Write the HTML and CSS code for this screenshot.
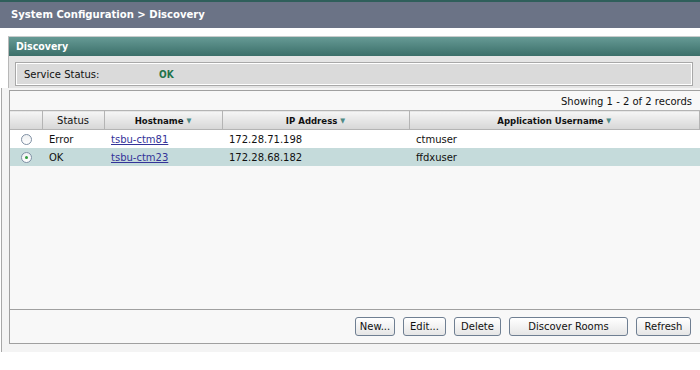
FILE: index.html
```html
<!DOCTYPE html>
<html lang="en">
<head>
    <meta charset="UTF-8">
    <title>System Configuration &gt; Discovery</title>
    <link rel="stylesheet" href="styles.css">
</head>
<body>
    <div class="topline"></div>
    <div class="titlebar">System Configuration &gt; Discovery</div>

    <div class="panel">
        <div class="panel-head">Discovery</div>
        <div class="status-box">
            <span class="status-label">Service Status:</span>
            <span class="status-value">OK</span>
        </div>
    </div>

    <div class="grid-area">
        <div class="grid">
            <div class="records">Showing 1 - 2 of 2 records</div>
            <table class="list">
                <colgroup>
                    <col class="c-sel">
                    <col class="c-status">
                    <col class="c-host">
                    <col class="c-ip">
                    <col>
                </colgroup>
                <thead>
                    <tr>
                        <th></th>
                        <th class="plain">Status</th>
                        <th>Hostname <span class="arrow">&#9660;</span></th>
                        <th>IP Address <span class="arrow">&#9660;</span></th>
                        <th>Application Username <span class="arrow">&#9660;</span></th>
                    </tr>
                </thead>
                <tbody>
                    <tr>
                        <td class="sel"><span class="radio"></span></td>
                        <td>Error</td>
                        <td><a href="#">tsbu-ctm81</a></td>
                        <td>172.28.71.198</td>
                        <td>ctmuser</td>
                    </tr>
                    <tr class="selected">
                        <td class="sel"><span class="radio checked"></span></td>
                        <td>OK</td>
                        <td><a href="#">tsbu-ctm23</a></td>
                        <td>172.28.68.182</td>
                        <td>ffdxuser</td>
                    </tr>
                </tbody>
            </table>
            <div class="filler"></div>
            <div class="actions">
                <button class="btn b-new">New...</button>
                <button class="btn b-edit">Edit...</button>
                <button class="btn b-delete">Delete</button>
                <button class="btn b-discover">Discover Rooms</button>
                <button class="btn b-refresh">Refresh</button>
            </div>
        </div>
    </div>
</body>
</html>
```

FILE: styles.css
```css
/* General */
body {
    margin: 0;
    background-color: #fff;
    font-family: 'DejaVu Sans', Verdana, sans-serif;
    font-size: 10px;
    color: #111;
}

.topline {
    height: 2px;
    background-color: #2f5f5b;
}

.titlebar {
    height: 26px;
    line-height: 26px;
    padding-left: 11px;
    background-color: #6b7386;
    color: #fff;
    font-family: 'DejaVu Sans Condensed', 'DejaVu Sans', sans-serif;
    font-weight: bold;
    font-size: 11.2px;
    margin-bottom: 8px;
}

/* Discovery panel */
.panel {
    margin-left: 8px;
    border-top: 1px solid #c8cccc;
    border-left: 1px solid #b8b8b8;
    background-color: #e4e4e4;
    height: 51px;
}

.panel-head {
    height: 19px;
    line-height: 19px;
    padding-left: 7px;
    background: linear-gradient(#669a95, #3b6f69);
    color: #fff;
    font-family: 'DejaVu Sans Condensed', 'DejaVu Sans', sans-serif;
    font-weight: bold;
    font-size: 10.5px;
}

.status-box {
    display: flex;
    align-items: center;
    margin: 6px 7px 0 6px;
    height: 22px;
    border: 1px solid #a8a8a8;
    box-shadow: inset 1px 1px 0 #fff, inset -1px -1px 0 #fff;
    background-color: #dadada;
}

.status-label {
    width: 135px;
    padding-left: 8px;
}

.status-value {
    color: #22734a;
    font-family: 'DejaVu Sans Condensed', 'DejaVu Sans', sans-serif;
    font-weight: bold;
}

/* Grid */
.grid-area {
    margin-left: 1px;
    border-left: 1px solid #a8a8a8;
    padding: 2px 0 8px 7px;
    background-color: #f4f4f4;
}

.grid {
    border: 1px solid #a0a0a0;
    border-right: none;
    background-color: #f8f8f8;
    height: 252px;
    display: flex;
    flex-direction: column;
}

.records {
    height: 19px;
    line-height: 22px;
    text-align: right;
    padding-right: 8px;
}

.list {
    width: 100%;
    border-collapse: collapse;
    table-layout: fixed;
}

.c-sel { width: 32px; }
.c-status { width: 62px; }
.c-host { width: 118px; }
.c-ip { width: 187px; }

.list th {
    height: 18px;
    padding: 0;
    border: 1px solid #b4b4b4;
    border-left-color: #c4c4c4;
    background: linear-gradient(#f6f6f6, #d6d6d6);
    font-family: 'DejaVu Sans Condensed', 'DejaVu Sans', sans-serif;
    font-weight: bold;
    font-size: 9.5px;
    text-align: center;
}

.list th:first-child {
    border-left: none;
}

.list th.plain {
    font-family: 'DejaVu Sans', sans-serif;
    font-weight: normal;
    font-size: 10px;
}

.arrow {
    color: #4e8a86;
    font-size: 7px;
    vertical-align: 1px;
}

.list td {
    height: 18px;
    padding: 0 0 0 7px;
    background-color: #fff;
    white-space: nowrap;
}

.list tr.selected td {
    background-color: #c5dbdb;
}

.list td.sel {
    padding-left: 11px;
}

.list a {
    color: #333399;
}

.radio {
    display: block;
    width: 9px;
    height: 9px;
    border: 1px solid #7f90a4;
    border-radius: 50%;
    background: linear-gradient(#eef0f2, #ffffff);
    position: relative;
}

.radio.checked::after {
    content: '';
    position: absolute;
    left: 3px;
    top: 3px;
    width: 3px;
    height: 3px;
    border-radius: 50%;
    background-color: #2d9a3a;
}

.filler {
    flex: 1;
    background-color: #f8f8f8;
}

/* Buttons */
.actions {
    height: 33px;
    border-top: 1px solid #a0a0a0;
    display: flex;
    justify-content: flex-end;
    align-items: center;
    gap: 8px;
    padding-right: 9px;
}

.btn {
    height: 19px;
    padding: 0;
    font-family: inherit;
    font-size: 10px;
    color: #111;
    border: 1px solid #6f7f92;
    border-radius: 3px;
    background: linear-gradient(#ffffff, #e6e6e6);
}

.b-new { width: 40px; }
.b-edit { width: 43px; }
.b-delete { width: 47px; }
.b-discover { width: 119px; }
.b-refresh { width: 55px; }
```
